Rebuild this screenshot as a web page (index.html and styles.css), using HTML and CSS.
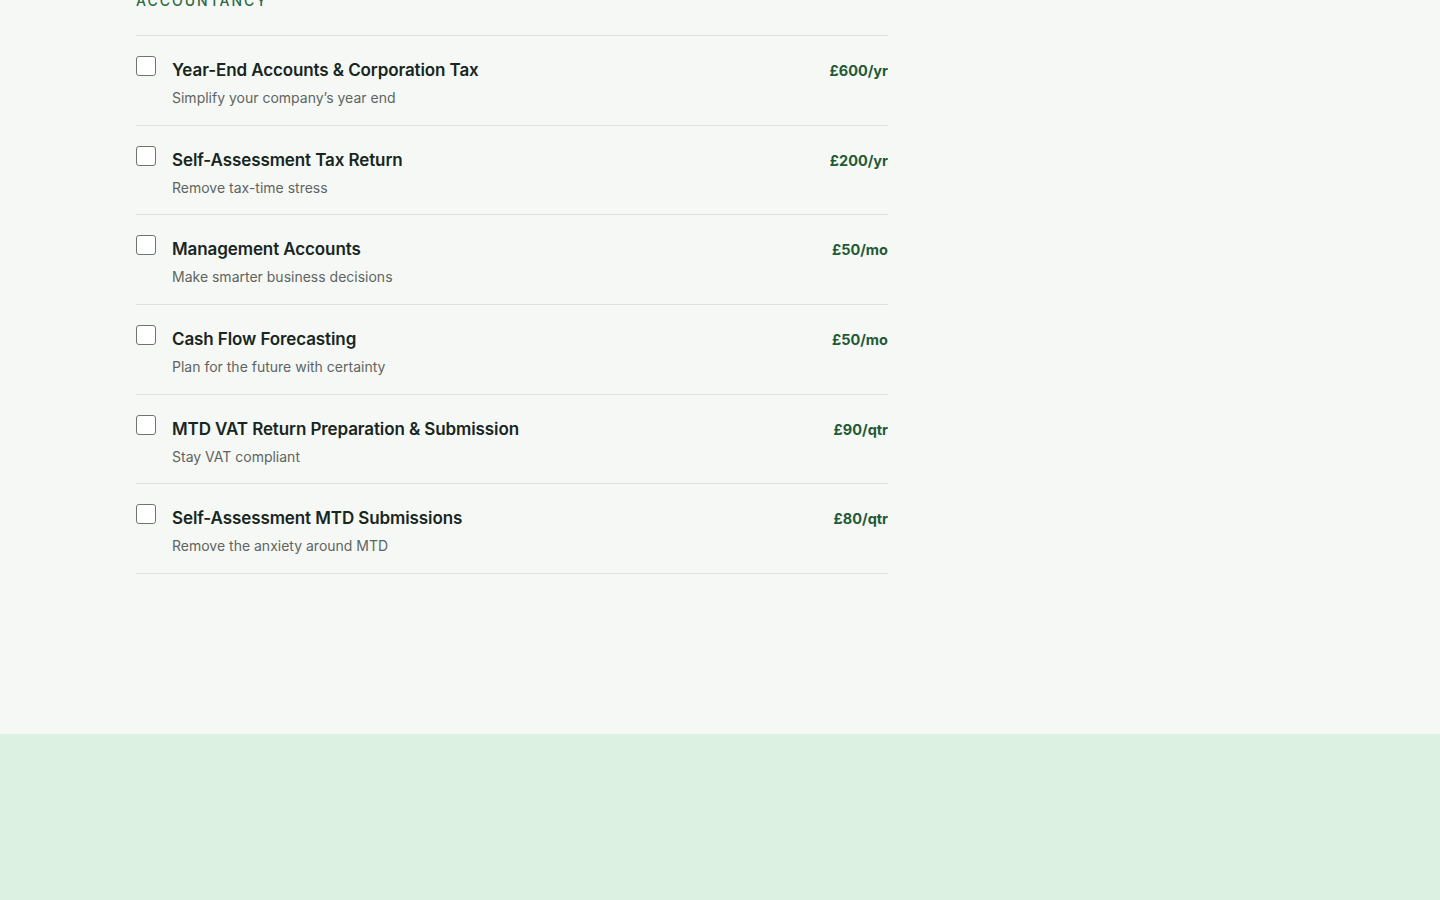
FILE: index.html
```html
<!DOCTYPE html>
<html lang="en">
<head>
<meta charset="utf-8">
<title>Accountancy services</title>
<link rel="stylesheet" href="styles.css">
</head>
<body>
<section class="services">
  <div class="container">
    <h2 class="group-title">ACCOUNTANCY</h2>
    <ul class="service-list">
      <li class="service">
        <input type="checkbox" class="check" aria-label="Year-End Accounts &amp; Corporation Tax">
        <div class="info">
          <div class="name">Year-End Accounts &amp; Corporation Tax</div>
          <div class="desc">Simplify your company’s year end</div>
        </div>
        <div class="price">£600/yr</div>
      </li>
      <li class="service">
        <input type="checkbox" class="check" aria-label="Self-Assessment Tax Return">
        <div class="info">
          <div class="name">Self-Assessment Tax Return</div>
          <div class="desc">Remove tax-time stress</div>
        </div>
        <div class="price">£200/yr</div>
      </li>
      <li class="service">
        <input type="checkbox" class="check" aria-label="Management Accounts">
        <div class="info">
          <div class="name">Management Accounts</div>
          <div class="desc">Make smarter business decisions</div>
        </div>
        <div class="price">£50/mo</div>
      </li>
      <li class="service">
        <input type="checkbox" class="check" aria-label="Cash Flow Forecasting">
        <div class="info">
          <div class="name">Cash Flow Forecasting</div>
          <div class="desc">Plan for the future with certainty</div>
        </div>
        <div class="price">£50/mo</div>
      </li>
      <li class="service">
        <input type="checkbox" class="check" aria-label="MTD VAT Return Preparation &amp; Submission">
        <div class="info">
          <div class="name">MTD VAT Return Preparation &amp; Submission</div>
          <div class="desc">Stay VAT compliant</div>
        </div>
        <div class="price">£90/qtr</div>
      </li>
      <li class="service">
        <input type="checkbox" class="check" aria-label="Self-Assessment MTD Submissions">
        <div class="info">
          <div class="name">Self-Assessment MTD Submissions</div>
          <div class="desc">Remove the anxiety around MTD</div>
        </div>
        <div class="price">£80/qtr</div>
      </li>
    </ul>
  </div>
</section>
<footer class="band"></footer>
</body>
</html>
```

FILE: styles.css
```css
* { box-sizing: border-box; }

html, body {
  margin: 0;
  padding: 0;
}

body {
  font-family: Inter, "Noto Sans", "Liberation Sans", sans-serif;
  background: #f6f8f6;
  color: #1a2a22;
}

.services {
  background: #f6f8f6;
  height: 734px;
  overflow: hidden;
}

.container {
  width: 752px;
  margin-left: 136px;
  margin-top: -9px;
}

.group-title {
  margin: 0 0 24px 0;
  font-size: 14px;
  line-height: 20px;
  font-weight: 500;
  letter-spacing: 2px;
  color: #2c6a45;
}

.service-list {
  list-style: none;
  margin: 0;
  padding: 0;
  border-top: 1px solid #dde2de;
}

.service {
  display: flex;
  align-items: flex-start;
  height: 89.67px;
  padding-top: 20px;
  border-bottom: 1px solid #dde2de;
}

.check {
  appearance: none;
  -webkit-appearance: none;
  margin: 0;
  width: 20px;
  height: 20px;
  flex: 0 0 20px;
  background: #ffffff;
  border: 1px solid #6f7471;
  border-radius: 3px;
}

.info {
  flex: 1;
  margin-left: 16px;
  margin-top: 1px;
}

.name {
  font-size: 17px;
  line-height: 26px;
  font-weight: 600;
  color: #17261e;
  letter-spacing: -0.1px;
}

.desc {
  margin-top: 5px;
  font-size: 14px;
  line-height: 20px;
  color: #5e6561;
}

.price {
  font-size: 14.5px;
  line-height: 26px;
  font-weight: 700;
  color: #1f5a35;
  margin-top: 2px;
}

.band {
  height: 166px;
  background: #ddf1e2;
}
```
